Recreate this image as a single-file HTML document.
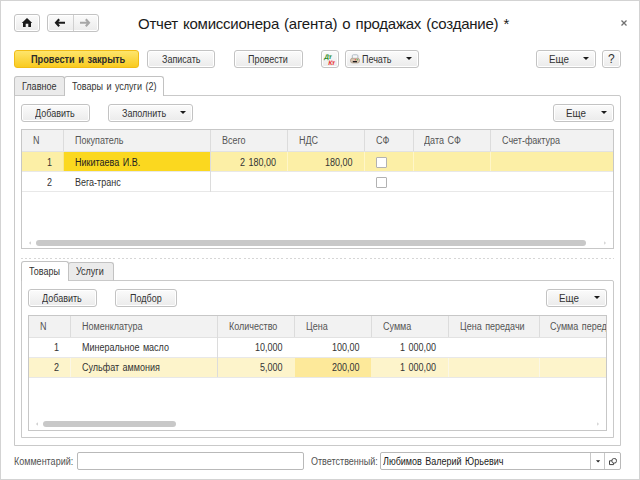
<!DOCTYPE html>
<html><head><meta charset="utf-8">
<style>
*{box-sizing:border-box;margin:0;padding:0}
html,body{width:640px;height:480px;overflow:hidden;background:#fff}
body{position:relative;font-family:"Liberation Sans",sans-serif;font-size:10px;color:#333;letter-spacing:0}
.a{position:absolute}
.t{position:absolute;line-height:12px;white-space:nowrap;margin-top:1px;transform:scaleX(.9);transform-origin:0 0;word-spacing:1.1px}
.win{position:absolute;left:0;top:0;width:640px;height:480px;border:1px solid #d3d3d3}
.btn{position:absolute;border:1px solid #c3c3c3;border-radius:3px;background:linear-gradient(#fbfbfb,#ebebeb);box-shadow:inset 0 0 0 1px #fff}
.ybtn{position:absolute;border:1px solid #f1bd16;border-radius:3px;background:linear-gradient(#fee56c,#f9cb20)}
.arr{position:absolute;width:0;height:0;border-left:3px solid transparent;border-right:3px solid transparent;border-top:3px solid #1a1a1a}
.grid{position:absolute;border:1px solid #c7c7c7;background:#fff}
.hdr{position:absolute;background:#f2f2f2}
.vl{position:absolute;width:1px;background:#dcdcdc}
.hl{position:absolute;height:1px;background:#e8e8e8}
.cb{position:absolute;width:11px;height:11px;border:1px solid #b2b2b2;background:#fff;border-radius:1px}
.tab{position:absolute;border:1px solid #c2c2c2;border-bottom:none;border-radius:3px 3px 0 0;background:#ebebeb}
.tabA{background:#fff}
.panel{position:absolute;border:1px solid #c9c9c9}
.inp{position:absolute;border:1px solid #b9b9b9;border-radius:2px;background:#fff}
.sb{position:absolute;height:6px;border-radius:3px;background:#c8c8c8}
</style></head><body>
<div class="win"></div>

<!-- header -->
<div class="btn" style="left:14px;top:14px;width:26px;height:18px"></div>
<svg class="a" style="left:21px;top:17px" width="12" height="11" viewBox="0 0 12 11"><path d="M6 1 L11.2 6 L10 6 L10 10 L7.3 10 L7.3 6.8 L4.7 6.8 L4.7 10 L2 10 L2 6 L0.8 6 Z" fill="#1a1a1a"/></svg>
<div class="btn" style="left:47px;top:14px;width:52px;height:18px"></div>
<div class="vl" style="left:73px;top:15px;height:16px;background:#d0d0d0"></div>
<svg class="a" style="left:54px;top:17px" width="12" height="11" viewBox="0 0 12 11"><path d="M5.2 2.2 L2 5.7 L5.2 9.2 M2.5 5.7 H11" fill="none" stroke="#1a1a1a" stroke-width="2.1"/></svg>
<svg class="a" style="left:79px;top:17px" width="12" height="11" viewBox="0 0 12 11"><path d="M6.8 2.2 L10 5.7 L6.8 9.2 M9.5 5.7 H1" fill="none" stroke="#a6a6a6" stroke-width="2.1"/></svg>
<div class="t" style="left:138px;top:13px;font-size:15px;line-height:20px;letter-spacing:-0.23px;color:#1a1a1a;transform:none">Отчет комиссионера (агента) о продажах (создание) *</div>
<svg class="a" style="left:620px;top:19px" width="8" height="8" viewBox="0 0 8 8"><path d="M1.5 1.5 L6.5 6.5 M6.5 1.5 L1.5 6.5" stroke="#707070" stroke-width="1.3"/></svg>

<!-- toolbar -->
<div class="ybtn" style="left:14px;top:50px;width:125px;height:18px"></div>
<div class="t" style="left:31px;top:53px;font-weight:bold;color:#2b2b2b;transform:scaleX(.92)">Провести и закрыть</div>
<div class="btn" style="left:147px;top:50px;width:68px;height:18px"></div>
<div class="t" style="left:162px;top:53px">Записать</div>
<div class="btn" style="left:234px;top:50px;width:69px;height:18px"></div>
<div class="t" style="left:248px;top:53px">Провести</div>
<div class="btn" style="left:321px;top:50px;width:18px;height:18px"></div>
<div class="t" style="left:325px;top:52px;font-size:6.5px;line-height:7px;font-weight:bold;color:#1f8a1f;letter-spacing:-0.3px;transform:skewX(-10deg)">Дт</div>
<div class="t" style="left:329px;top:58px;font-size:6.5px;line-height:7px;font-weight:bold;color:#ea2a2a;letter-spacing:-0.3px;transform:skewX(-10deg)">Кт</div>
<div class="btn" style="left:345px;top:50px;width:74px;height:18px"></div>
<svg class="a" style="left:350px;top:54px" width="11" height="10" viewBox="0 0 11 10"><path d="M2.3 4.6 V1.8 Q2.3 0.8 3.3 0.8 H6.9 Q7.9 0.8 7.9 1.8 V4.6" fill="#f6f8fa" stroke="#aab4be" stroke-width="0.9"/><rect x="0.5" y="4.3" width="9" height="4.6" rx="1.8" fill="#d8c4b0" stroke="#a89684" stroke-width="0.7"/><rect x="2.8" y="7" width="4.2" height="1.3" fill="#1c1c1c"/><circle cx="5.4" cy="5.7" r="0.7" fill="#ef5b5b"/><circle cx="7.3" cy="5.7" r="0.7" fill="#5cbf5c"/></svg>
<div class="t" style="left:362px;top:53px">Печать</div>
<div class="arr" style="left:406px;top:57px"></div>
<div class="btn" style="left:536px;top:50px;width:60px;height:18px"></div>
<div class="t" style="left:549px;top:53px;transform:scaleX(.98)">Еще</div>
<div class="arr" style="left:583px;top:57px"></div>
<div class="btn" style="left:602px;top:50px;width:19px;height:18px"></div>
<div class="t" style="left:608px;top:52px;font-size:12px;line-height:13px;color:#333;letter-spacing:0;transform:none">?</div>

<!-- tabs -->
<div class="panel" style="left:14px;top:95px;width:607px;height:351px;border-radius:0 2px 0 0"></div>
<div class="tab" style="left:14px;top:76px;width:51px;height:19px;border-bottom:1px solid #c9c9c9;height:20px"></div>
<div class="tab tabA" style="left:64px;top:76px;width:100px;height:20px"></div>
<div class="t" style="left:22px;top:80px">Главное</div>
<div class="t" style="left:72px;top:80px">Товары и услуги (2)</div>

<!-- panel 1 buttons -->
<div class="btn" style="left:21px;top:104px;width:69px;height:18px"></div>
<div class="t" style="left:35px;top:107px">Добавить</div>
<div class="btn" style="left:108px;top:104px;width:85px;height:18px"></div>
<div class="t" style="left:122px;top:107px">Заполнить</div>
<div class="arr" style="left:180px;top:111px"></div>
<div class="btn" style="left:553px;top:104px;width:61px;height:18px"></div>
<div class="t" style="left:566px;top:107px;transform:scaleX(.98)">Еще</div>
<div class="arr" style="left:601px;top:111px"></div>

<!-- table 1 -->
<div class="grid" style="left:21px;top:129px;width:593px;height:120px"></div>
<div class="hdr" style="left:22px;top:130px;width:591px;height:21px"></div>
<div class="hl" style="left:22px;top:151px;width:591px;background:#e2e2e2"></div>
<div class="a" style="left:22px;top:152px;width:591px;height:19px;background:#fcefa6"></div>
<div class="a" style="left:64px;top:152px;width:146px;height:19px;background:#fbd81f"></div>
<div class="hl" style="left:22px;top:171px;width:591px"></div>
<div class="hl" style="left:22px;top:191px;width:591px"></div>
<div class="vl" style="left:63px;top:130px;height:21px"></div>
<div class="vl" style="left:210px;top:130px;height:62px"></div>
<div class="vl" style="left:287px;top:130px;height:21px"></div>
<div class="vl" style="left:364px;top:130px;height:21px"></div>
<div class="vl" style="left:413px;top:130px;height:21px"></div>
<div class="vl" style="left:490px;top:130px;height:21px"></div>
<div class="vl" style="left:63px;top:152px;height:19px;background:#f6e690"></div>
<div class="vl" style="left:287px;top:152px;height:19px;background:#fff6c8"></div>
<div class="vl" style="left:364px;top:152px;height:19px;background:#fff6c8"></div>
<div class="vl" style="left:413px;top:152px;height:19px;background:#fff6c8"></div>
<div class="vl" style="left:490px;top:152px;height:19px;background:#fff6c8"></div>
<div class="t" style="left:33px;top:134px;color:#555">N</div>
<div class="t" style="left:75px;top:134px;color:#555">Покупатель</div>
<div class="t" style="left:222px;top:134px;color:#555">Всего</div>
<div class="t" style="left:299px;top:134px;color:#555">НДС</div>
<div class="t" style="left:376px;top:134px;color:#555">СФ</div>
<div class="t" style="left:424px;top:134px;color:#555">Дата СФ</div>
<div class="t" style="left:502px;top:134px;color:#555">Счет-фактура</div>
<div class="t" style="left:47px;top:156px">1</div>
<div class="t" style="left:75px;top:156px;color:#222">Никитаева И.В.</div>
<div class="t" style="left:240px;top:156px">2 180,00</div>
<div class="t" style="left:325px;top:156px">180,00</div>
<div class="cb" style="left:376px;top:157px"></div>
<div class="t" style="left:47px;top:176px">2</div>
<div class="t" style="left:75px;top:176px">Вега-транс</div>
<div class="cb" style="left:376px;top:177px"></div>
<svg class="a" style="left:28px;top:240px" width="4" height="6" viewBox="0 0 4 6"><path d="M3 1.3 L0.8 3 L3 4.7 Z" fill="#d2d2d2"/></svg>
<div class="sb" style="left:36px;top:240px;width:550px"></div>
<svg class="a" style="left:603px;top:240px" width="4" height="6" viewBox="0 0 4 6"><path d="M1 1.3 L3.2 3 L1 4.7 Z" fill="#d8d8d8"/></svg>

<!-- dashed separator -->
<div class="a" style="left:21px;top:258px;width:593px;height:1px;background:repeating-linear-gradient(90deg,#d6d6d6 0 2.1px,transparent 2.1px 4.2px)"></div>

<!-- inner tabs -->
<div class="panel" style="left:21px;top:280px;width:593px;height:158px;border-radius:0 2px 0 0"></div>
<div class="tab tabA" style="left:21px;top:261px;width:48px;height:20px"></div>
<div class="tab" style="left:68px;top:262px;width:46px;height:19px;border-bottom:1px solid #c9c9c9"></div>
<div class="t" style="left:29px;top:265px">Товары</div>
<div class="t" style="left:76px;top:265px">Услуги</div>

<div class="btn" style="left:28px;top:289px;width:69px;height:18px"></div>
<div class="t" style="left:42px;top:292px">Добавить</div>
<div class="btn" style="left:115px;top:289px;width:62px;height:18px"></div>
<div class="t" style="left:130px;top:292px">Подбор</div>
<div class="btn" style="left:546px;top:289px;width:61px;height:18px"></div>
<div class="t" style="left:559px;top:292px;transform:scaleX(.98)">Еще</div>
<div class="arr" style="left:594px;top:296px"></div>

<!-- table 2 -->
<div class="grid" style="left:28px;top:315px;width:579px;height:116px"></div>
<div class="hdr" style="left:29px;top:316px;width:577px;height:21px"></div>
<div class="hl" style="left:29px;top:337px;width:577px;background:#e2e2e2"></div>
<div class="hl" style="left:29px;top:357px;width:577px"></div>
<div class="a" style="left:29px;top:358px;width:577px;height:19px;background:#fdf4cb"></div>
<div class="a" style="left:295px;top:358px;width:76px;height:19px;background:#fde99a"></div>
<div class="hl" style="left:29px;top:377px;width:577px"></div>
<div class="vl" style="left:70px;top:316px;height:21px"></div>
<div class="vl" style="left:217px;top:316px;height:61px"></div>
<div class="vl" style="left:294px;top:316px;height:21px"></div>
<div class="vl" style="left:371px;top:316px;height:21px"></div>
<div class="vl" style="left:448px;top:316px;height:21px"></div>
<div class="vl" style="left:539px;top:316px;height:21px"></div>
<div class="vl" style="left:70px;top:358px;height:19px;background:#fbf7e6"></div>
<div class="vl" style="left:448px;top:358px;height:19px;background:#fbf7e6"></div>
<div class="vl" style="left:539px;top:358px;height:19px;background:#fbf7e6"></div>
<div class="t" style="left:40px;top:320px;color:#555">N</div>
<div class="t" style="left:82px;top:320px;color:#555">Номенклатура</div>
<div class="t" style="left:229px;top:320px;color:#555">Количество</div>
<div class="t" style="left:306px;top:320px;color:#555">Цена</div>
<div class="t" style="left:383px;top:320px;color:#555">Сумма</div>
<div class="t" style="left:460px;top:320px;color:#555">Цена передачи</div>
<div class="a" style="left:540px;top:316px;width:66px;height:21px;overflow:hidden"><div class="t" style="left:10px;top:4px;color:#555">Сумма передачи</div></div>
<div class="t" style="left:54px;top:341px">1</div>
<div class="t" style="left:82px;top:341px">Минеральное масло</div>
<div class="t" style="left:255px;top:341px">10,000</div>
<div class="t" style="left:332px;top:341px">100,00</div>
<div class="t" style="left:400px;top:341px">1 000,00</div>
<div class="t" style="left:54px;top:361px">2</div>
<div class="t" style="left:82px;top:361px">Сульфат аммония</div>
<div class="t" style="left:260px;top:361px">5,000</div>
<div class="t" style="left:332px;top:361px">200,00</div>
<div class="t" style="left:400px;top:361px">1 000,00</div>
<svg class="a" style="left:35px;top:421px" width="4" height="6" viewBox="0 0 4 6"><path d="M3 1.3 L0.8 3 L3 4.7 Z" fill="#d2d2d2"/></svg>
<div class="sb" style="left:43px;top:421px;width:133px"></div>
<svg class="a" style="left:596px;top:421px" width="4" height="6" viewBox="0 0 4 6"><path d="M1 1.3 L3.2 3 L1 4.7 Z" fill="#d8d8d8"/></svg>

<!-- footer -->
<div class="t" style="left:14px;top:455px;color:#525252">Комментарий:</div>
<div class="inp" style="left:77px;top:452px;width:227px;height:18px"></div>
<div class="t" style="left:311px;top:455px;color:#525252">Ответственный:</div>
<div class="inp" style="left:380px;top:452px;width:241px;height:18px"></div>
<div class="vl" style="left:590px;top:453px;height:16px;background:#c8c8c8"></div>
<div class="vl" style="left:604px;top:453px;height:16px;background:#c8c8c8"></div>
<div class="t" style="left:383px;top:455px;color:#222">Любимов Валерий Юрьевич</div>
<svg class="a" style="left:595px;top:459px" width="6" height="5" viewBox="0 0 6 5"><path d="M1 1.3 H5.2 L3.1 3.6 Z" fill="#222"/></svg>
<svg class="a" style="left:607px;top:456px" width="11" height="11" viewBox="0 0 11 11"><rect x="5" y="2.6" width="4.4" height="4.4" rx="1.6" fill="none" stroke="#444" stroke-width="1"/><path d="M5 4.8 H2.5 V8.6 H6.6 V7" fill="none" stroke="#444" stroke-width="1"/></svg>
</body></html>
